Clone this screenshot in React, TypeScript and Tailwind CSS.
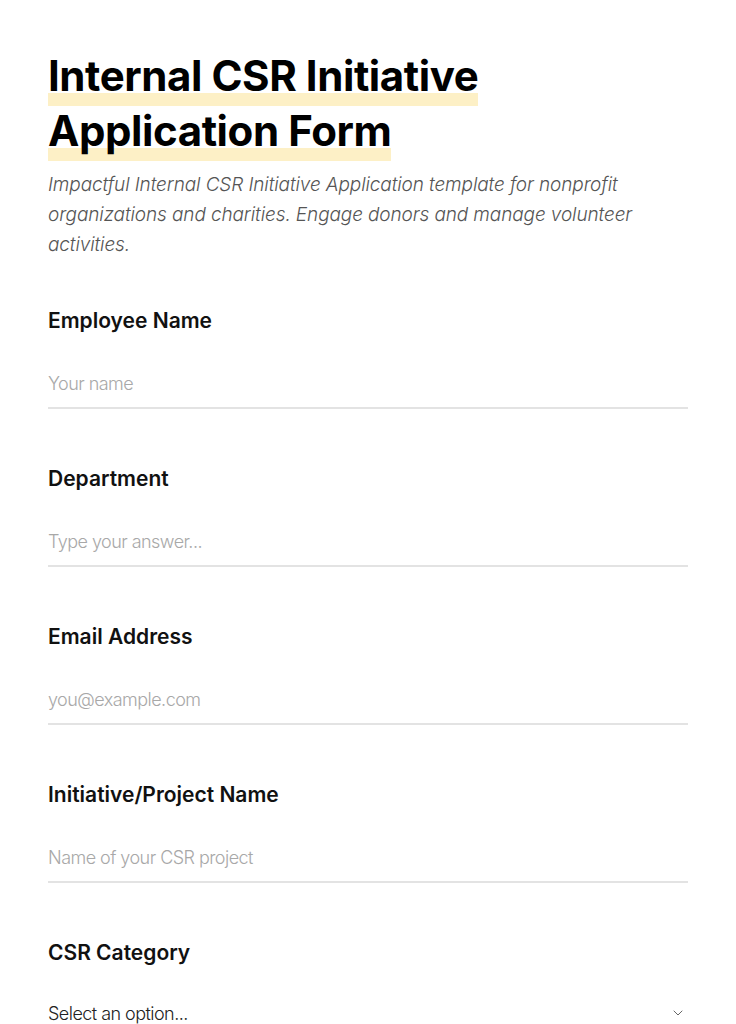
import { ChevronDown } from 'lucide-react';

const fields = [
  { label: 'Employee Name', placeholder: 'Your name' },
  { label: 'Department', placeholder: 'Type your answer...' },
  { label: 'Email Address', placeholder: 'you@example.com' },
  { label: 'Initiative/Project Name', placeholder: 'Name of your CSR project' },
];

const Field = ({ label, placeholder }: { label: string; placeholder: string }) => (
  <div className="flex flex-col">
    <label className="text-[21px] leading-[28px] font-semibold text-[#111] tracking-[0em]">{label}</label>
    <input
      placeholder={placeholder}
      className="mt-[25px] h-[49px] border-b-2 border-[#e3e3e3] text-[18px] font-light text-[#222] placeholder:text-[#a8a8a8] outline-none tracking-[-0.03em]"
    />
  </div>
);

export default function App() {
  return (
    <div className="min-h-screen bg-white px-12 pt-[48px] font-['Inter',sans-serif]">
      <h1 className="text-[42px] leading-[55px] font-bold text-black tracking-[-0.01em] max-w-[500px]">
        <span className="pb-[5px] bg-[linear-gradient(transparent_76%,#fdf0c6_76%)] [box-decoration-break:clone]">
          Internal CSR Initiative <br />
          Application Form
        </span>
      </h1>
      <p className="mt-[12px] text-[19px] leading-[30px] italic font-light text-[#555] tracking-[-0.006em]">
        Impactful Internal CSR Initiative Application template for nonprofit organizations and charities. Engage donors
        and manage volunteer activities.
      </p>

      <div className="mt-[47px] flex flex-col gap-[56px]">
        {fields.map((f) => (
          <Field key={f.label} {...f} />
        ))}
        <div className="flex flex-col">
          <label className="text-[21px] leading-[28px] font-semibold text-[#111] tracking-[0em]">CSR Category</label>
          <div className="mt-[25px] h-[44px] flex items-center justify-between border-b-2 border-[#e3e3e3]">
            <span className="text-[18px] font-light text-[#222] tracking-[-0.03em]">Select an option...</span>
            <ChevronDown className="w-4 h-4 mr-[2px] text-[#666]" strokeWidth={1.5} />
          </div>
        </div>
      </div>
    </div>
  );
}
